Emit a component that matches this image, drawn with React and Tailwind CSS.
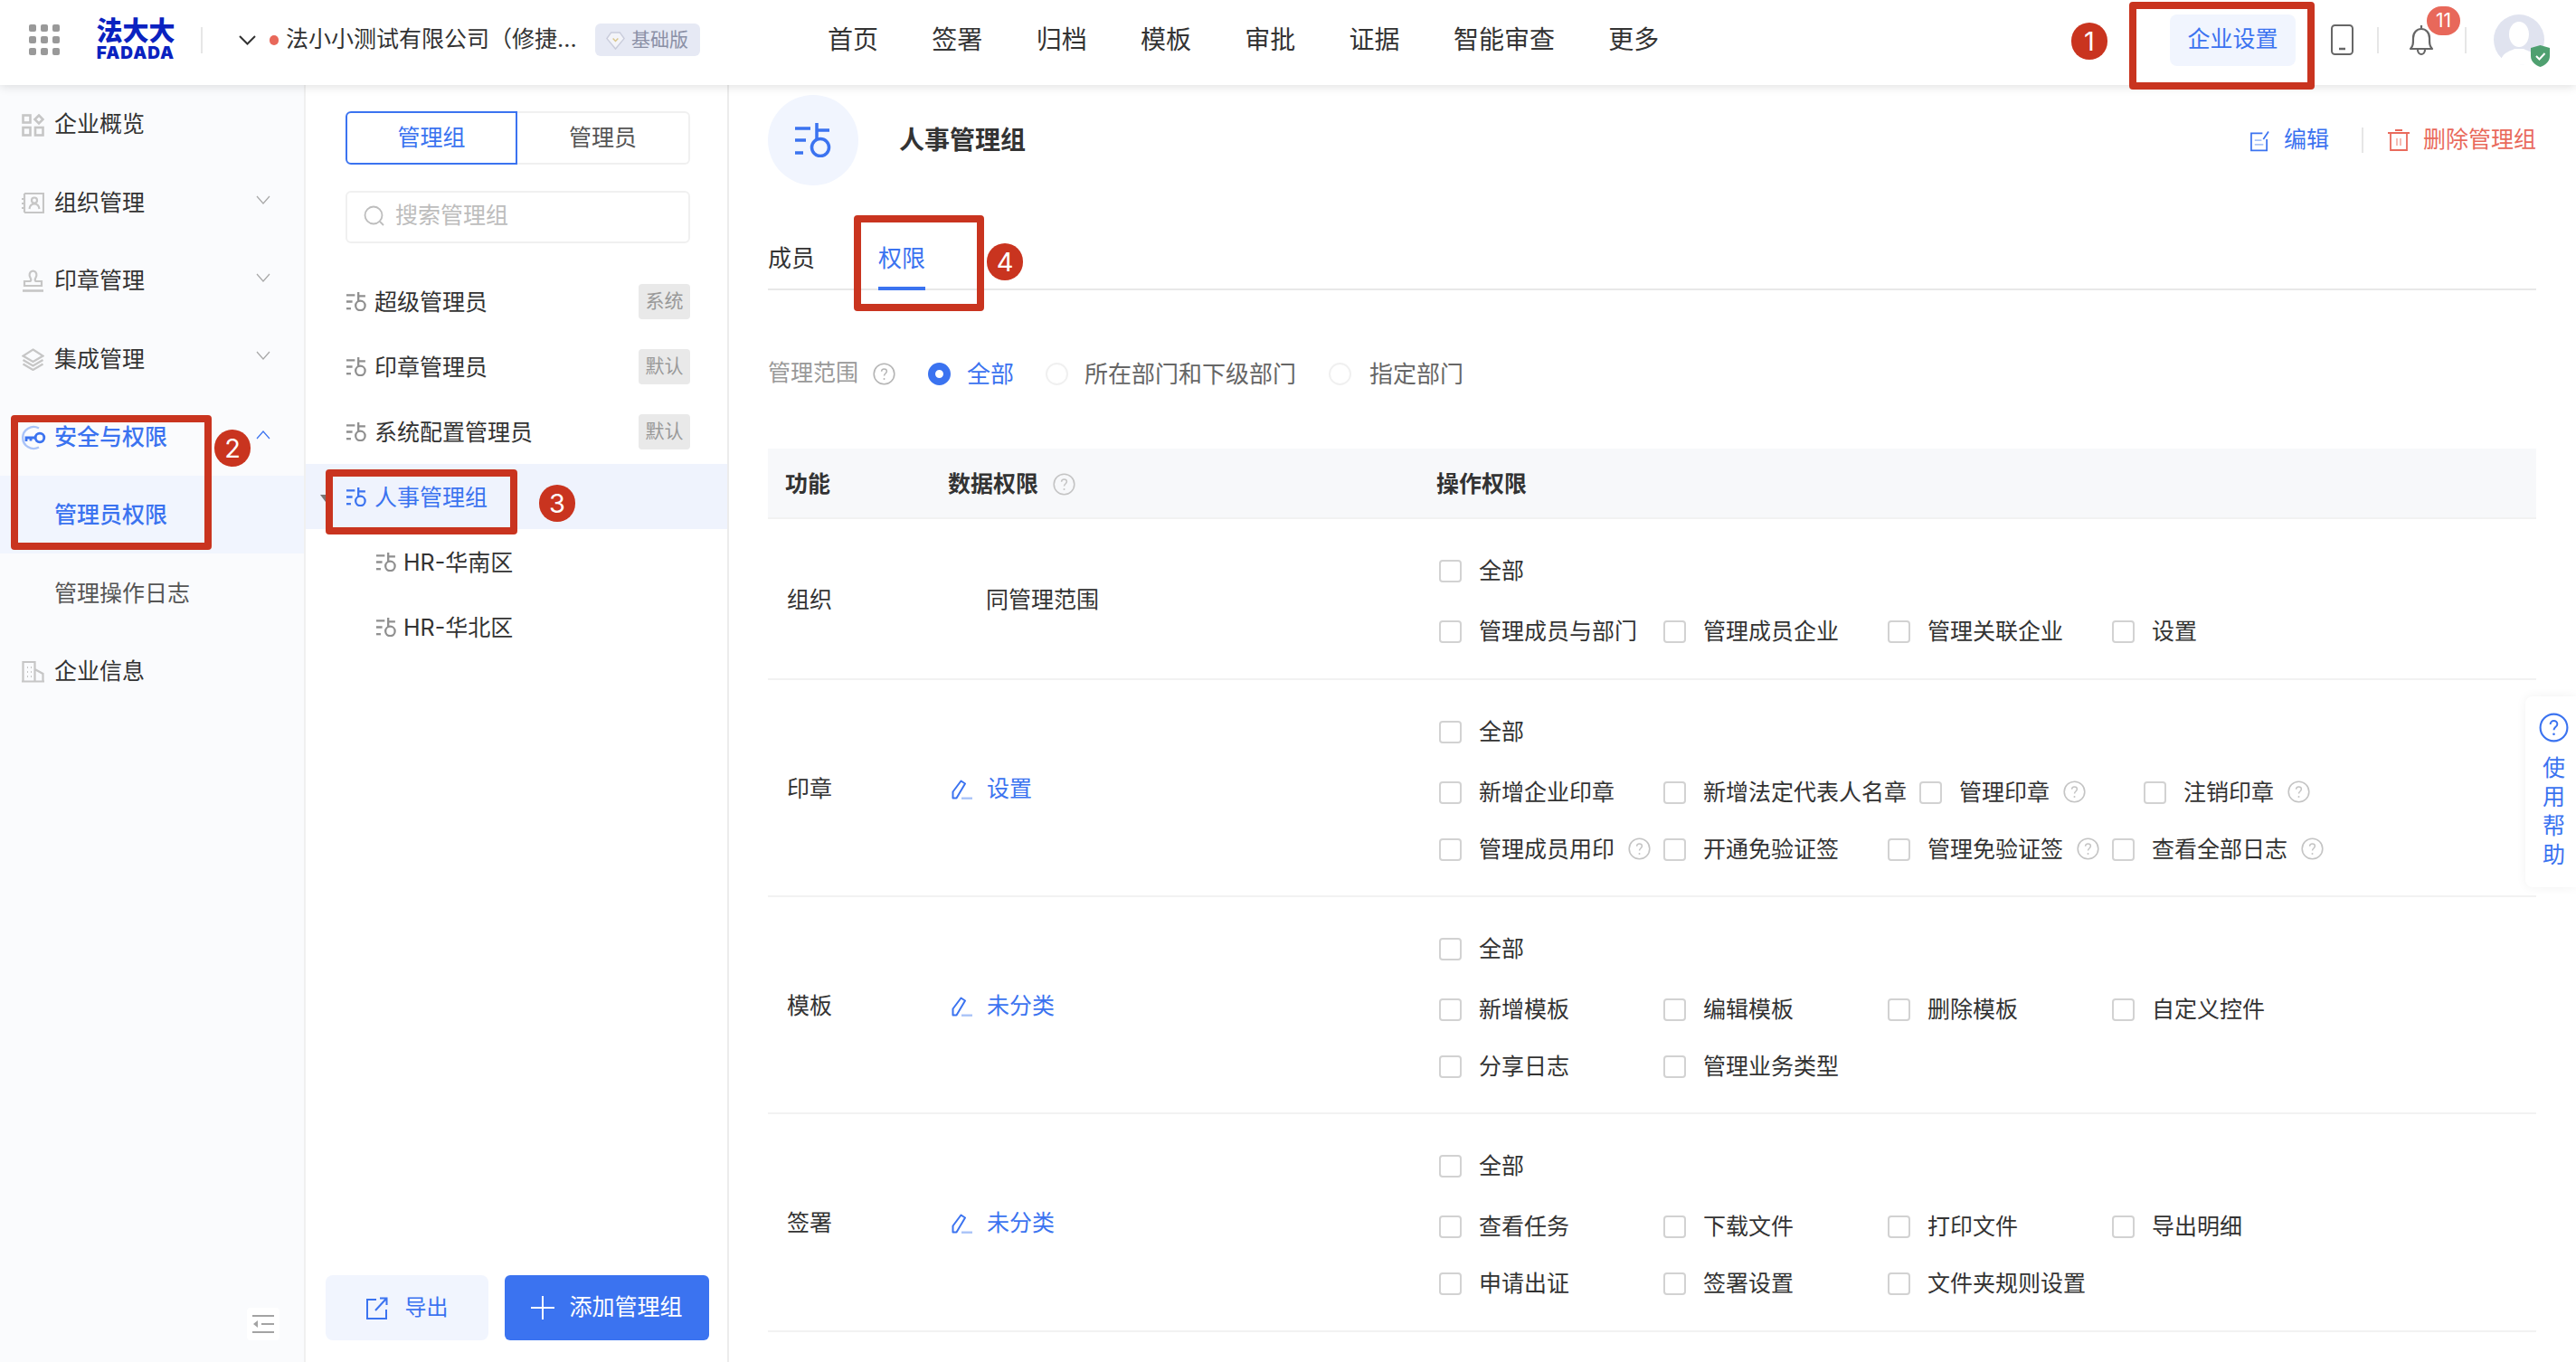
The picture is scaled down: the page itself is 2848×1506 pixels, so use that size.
import React from "react";

const BLUE = "#3b73f0";

function GroupIcon({ className = "w-[22px] h-[21px]", color = "#8f8f8f", width = 2.6 }) {
  return (
    <svg viewBox="0 0 40 38" fill="none" stroke={color} strokeWidth={width * 1.6} className={className}>
      <path d="M0 6h17M0 19h12" />
      <path d="M0 33h9" />
      <circle cx="28" cy="27" r="9.5" />
      <path d="M24 0v18M24 8h14" />
    </svg>
  );
}

function Chevron({ up = false, color = "#a8a8a8" }) {
  return (
    <svg viewBox="0 0 16 10" fill="none" stroke={color} strokeWidth="1.2" className={`w-[16px] h-[10px] ${up ? "-mt-[5px]" : "-mt-[8px]"}`}>
      <path d={up ? "M1 9l7-8 7 8" : "M1 1l7 8 7-8"} />
    </svg>
  );
}

function HelpIcon({ color = "#c4c4c4", className = "w-[25px] h-[25px]" }) {
  return (
    <svg viewBox="0 0 25 25" fill="none" className={className}>
      <circle cx="12.5" cy="12.5" r="11.3" stroke={color} strokeWidth="1.6" />
      <path d="M9.6 9.8c0-1.7 1.3-2.9 2.9-2.9s2.9 1.1 2.9 2.7c0 2.4-2.9 2.4-2.9 5" stroke={color} strokeWidth="1.5" />
      <circle cx="12.5" cy="18" r="1" fill={color} />
    </svg>
  );
}

function Pencil() {
  return (
    <svg viewBox="0 0 23 22" fill="none" className="w-[23px] h-[22px] shrink-0">
      <path d="M1.500 20.500v-7L10.500 1.500l4.500 3L5.500 20.500z" stroke={BLUE} strokeWidth="2" strokeLinejoin="round" />
      <path d="M11 20.700h12" stroke="#a9c3f8" strokeWidth="2.400" />
    </svg>
  );
}

function SideIcon({ name, active }) {
  const c = "#c6c6c6";
  if (name === "overview")
    return (
      <svg viewBox="0 0 25 25" fill="none" stroke={c} strokeWidth="2.600" className="w-[25px] h-[25px]">
        <rect x="1.500" y="1.500" width="8" height="8" />
        <path d="M19 1.500l4.500 4.500-4.500 4.500-4.500-4.500z" />
        <rect x="1.500" y="15" width="8" height="8.500" />
        <rect x="15" y="15" width="8.500" height="8.500" />
      </svg>
    );
  if (name === "org")
    return (
      <svg viewBox="0 0 25 25" fill="none" stroke={c} strokeWidth="2.200" className="w-[25px] h-[25px]">
        <path d="M3 2h21v21H3" />
        <path d="M3 2v21" />
        <path d="M0 8h4M0 13h4M0 18h4" />
        <circle cx="14" cy="9.500" r="3" />
        <path d="M8.500 19c.5-4 3-5.500 5.500-5.500s5 1.500 5.500 5.500" />
      </svg>
    );
  if (name === "seal")
    return (
      <svg viewBox="0 0 25 25" fill="none" stroke={c} strokeWidth="2.200" className="w-[25px] h-[25px]">
        <path d="M9.500 9c-1.500-2-1.500-7 3-7.500 4.500.5 4.500 5.500 3 7.500-1 1.500-1 3 0 4h6.500v5H3v-5h6.500c1-1 1-2.500 0-4z" />
        <path d="M1 23.500h23" strokeWidth="2.600" />
      </svg>
    );
  if (name === "layers")
    return (
      <svg viewBox="0 0 25 25" fill="none" stroke={c} strokeWidth="2.200" className="w-[25px] h-[25px]">
        <path d="M12.500 1.500l11 7-11 6.500-11-6.500z" />
        <path d="M1.500 13l11 6.500 11-6.500" />
        <path d="M1.500 17.500l11 6.500 11-6.500" />
      </svg>
    );
  if (name === "key")
    return (
      <svg viewBox="0 0 28 28" fill="none" className="w-[28px] h-[28px] -ml-[1px] shrink-0">
        <path d="M20 3.500a12 12 0 1 0 0 21" stroke="#a9c3f8" strokeWidth="2.400" />
        <circle cx="21" cy="14" r="4.800" stroke={active ? BLUE : c} strokeWidth="2.800" />
        <path d="M16 14H6v4M11 14v3.500" stroke={active ? BLUE : c} strokeWidth="2.800" />
      </svg>
    );
  return (
    <svg viewBox="0 0 25 25" fill="none" stroke={c} strokeWidth="2.200" className="w-[25px] h-[25px]">
      <path d="M1.500 23.500V2h13v21.500M14.500 10l9 5v8.500M0 23.500h25" />
      <path d="M6 8h1M10 8h1M6 13h1M10 13h1M6 18h1M10 18h1" />
    </svg>
  );
}

const sideItems = [
  { label: "企业概览", icon: "overview" },
  { label: "组织管理", icon: "org", chevron: true },
  { label: "印章管理", icon: "seal", chevron: true },
  { label: "集成管理", icon: "layers", chevron: true },
  { label: "安全与权限", icon: "key", chevron: true, up: true, active: true },
  { label: "管理员权限", sub: true, current: true },
  { label: "管理操作日志", sub: true },
  { label: "企业信息", icon: "building" },
];

const groups = [
  { label: "超级管理员", tag: "系统" },
  { label: "印章管理员", tag: "默认" },
  { label: "系统配置管理员", tag: "默认" },
  { label: "人事管理组", selected: true },
  { label: "HR-华南区", child: true },
  { label: "HR-华北区", child: true },
];

const navItems = ["首页", "签署", "归档", "模板", "审批", "证据", "智能审查", "更多"];

const permissions = [
  {
    name: "组织",
    plain: "同管理范围",
    height: "h-[178px]",
    lines: [[{ t: "管理成员与部门" }, { t: "管理成员企业" }, { t: "管理关联企业" }, { t: "设置" }]],
  },
  {
    name: "印章",
    link: "设置",
    height: "h-[240px]",
    lines: [
      [{ t: "新增企业印章" }, { t: "新增法定代表人名章" }, { t: "管理印章", help: true }, { t: "注销印章", help: true }],
      [{ t: "管理成员用印", help: true }, { t: "开通免验证签" }, { t: "管理免验证签", help: true }, { t: "查看全部日志", help: true }],
    ],
  },
  {
    name: "模板",
    link: "未分类",
    height: "h-[240px]",
    lines: [
      [{ t: "新增模板" }, { t: "编辑模板" }, { t: "删除模板" }, { t: "自定义控件" }],
      [{ t: "分享日志" }, { t: "管理业务类型" }],
    ],
  },
  {
    name: "签署",
    link: "未分类",
    height: "h-[241px]",
    lines: [
      [{ t: "查看任务" }, { t: "下载文件" }, { t: "打印文件" }, { t: "导出明细" }],
      [{ t: "申请出证" }, { t: "签署设置" }, { t: "文件夹规则设置" }],
    ],
  },
];

function Option({ t, help, wide = true }) {
  return (
    <div className={`flex items-center h-[30px] ${wide ? "min-w-[234px]" : ""}`}>
      <span className="w-[25px] h-[25px] mt-[2px] shrink-0 rounded-[4px] border-2 border-[#d2d2d2] bg-white" />
      <span className="ml-[19px] pt-[3px] whitespace-nowrap">{t}</span>
      {help && (
        <span className="ml-[15px] flex">
          <HelpIcon />
        </span>
      )}
    </div>
  );
}

function Header() {
  return (
    <header className="relative z-10 h-[94px] shrink-0 pb-[6px] bg-white flex items-center shadow-[0_2px_10px_rgba(0,0,0,0.12)]">
      <div className="w-[915px] shrink-0 flex items-center pl-[32px]">
        <div className="grid grid-cols-3 gap-[5.500px] w-[34px]">
          {Array.from({ length: 9 }).map((_, i) => (
            <span key={i} className="w-[7.500px] h-[7.500px] rounded-[2px] bg-[#999999]" />
          ))}
        </div>
        <div className="ml-[41px] w-[86px] flex flex-col items-center text-[#0a22c0]">
          <span className="text-[29px] leading-[26px] font-black whitespace-nowrap">法大大</span>
          <span className="mt-[3px] text-[19px] leading-[15px] font-black tracking-[1px]">FADADA</span>
        </div>
        <span className="ml-[29px] w-[2px] h-[29px] bg-[#e6e6e6]" />
        <svg viewBox="0 0 19 11" fill="none" stroke="#333333" strokeWidth="2" className="ml-[40px] w-[19px] h-[11px]">
          <path d="M1 1l8.500 8.500L18 1" />
        </svg>
        <span className="ml-[15px] w-[10px] h-[11px] rounded-full bg-[#e8685a]" />
        <span className="ml-[8px] w-[327px] text-[25px] text-[#333333] whitespace-nowrap overflow-hidden">法小小测试有限公司（修捷...</span>
        <span className="ml-[15px] w-[116px] h-[36px] rounded-[6px] bg-[#e6e9f4] flex items-center pl-[12px] text-[21px] text-[#8b90a6]">
          <svg viewBox="0 0 22 24" fill="none" className="w-[21px] h-[23px]">
            <path d="M6 3h10l5 7-10 12L1 10z" fill="#f3f4f9" stroke="#c9ccdb" strokeWidth="1.500" />
            <path d="M8 10l3 3 3-3" stroke="#d9c58a" strokeWidth="1.500" />
          </svg>
          <span className="ml-[7px]">基础版</span>
        </span>
      </div>
      <nav className="flex items-center gap-[59.300px] text-[28px] text-[#333333] whitespace-nowrap">
        {navItems.map((n) => (
          <span key={n}>{n}</span>
        ))}
      </nav>
      <div className="ml-auto flex items-center">
        <span className="w-[139px] h-[57px] rounded-[8px] bg-[#f1f5fe] text-[25px] text-[#3b73f0] flex items-center justify-center">企业设置</span>
        <svg viewBox="0 0 25 34" fill="none" className="ml-[39px] w-[25px] h-[34px]">
          <rect x="1" y="1" width="23" height="32" rx="3.500" stroke="#666666" strokeWidth="2" />
          <path d="M9 27h7" stroke="#666666" strokeWidth="2.500" />
        </svg>
        <span className="ml-[26px] w-[2px] h-[29px] bg-[#e6e6e6]" />
        <span className="relative ml-[33px] flex">
          <svg viewBox="0 0 28 35" fill="none" stroke="#666666" strokeWidth="2.200" className="w-[28px] h-[35px]">
            <path d="M14 1v3M2 27c3-3 3-6 3-12 0-6 4-10 9-10s9 4 9 10c0 6 0 9 3 12z" strokeLinejoin="round" />
            <path d="M10 28c0 3 2 5 4 5s4-2 4-5" />
          </svg>
          <span className="absolute left-[20px] -top-[20px] w-[37px] h-[32px] rounded-full bg-[#e8685a] text-white text-[21px] leading-[32px] text-center">11</span>
        </span>
        <span className="ml-[34px] w-[2px] h-[29px] bg-[#e6e6e6]" />
        <span className="relative ml-[30px] mr-[35px] flex">
          <svg viewBox="0 0 56 56" className="w-[56px] h-[56px]">
            <circle cx="28" cy="28" r="28" fill="#e0e3ef" />
            <ellipse cx="28" cy="22" rx="11" ry="14" fill="#ffffff" />
            <path d="M8 50c3-9 12-10 15-12h10c3 2 12 3 15 12-5 4-12 6-20 6S13 54 8 50z" fill="#ffffff" />
          </svg>
          <svg viewBox="0 0 21 24" className="absolute left-[41px] top-[34px] w-[21px] h-[24px]">
            <path d="M10.500 0L21 3v9c0 6-5 10-10.500 12C5 22 0 18 0 12V3z" fill="#4fa070" />
            <path d="M6 12l3.500 3.500L15.500 9" fill="none" stroke="#ffffff" strokeWidth="2" />
          </svg>
        </span>
      </div>
    </header>
  );
}

function Sidebar() {
  return (
    <aside className="relative w-[338px] shrink-0 border-r-2 border-[#f0f0f0] bg-[#fafbfd] text-[25px] text-[#333333]">
      {sideItems.map((item) => (
        <div
          key={item.label}
          className={`h-[86.400px] flex items-center pt-[2px] ${item.sub ? "pl-[60px]" : "pl-[24px]"} pr-[37px] ${item.current ? "bg-[#f1f5fe]" : ""} ${item.active || item.current ? "text-[#3b73f0] font-medium" : ""} ${item.sub && !item.current ? "text-[#555555]" : ""}`}
        >
          {item.icon && (
            <span className="w-[25px] mr-[11px] flex">
              <SideIcon name={item.icon} active={item.active} />
            </span>
          )}
          <span>{item.label}</span>
          {item.chevron && (
            <span className="ml-auto flex">
              <Chevron up={item.up} color={item.up ? BLUE : "#a8a8a8"} />
            </span>
          )}
        </div>
      ))}
      <span className="absolute left-[273px] top-[1352px] w-[36px] h-[36px] rounded-[4px] bg-white flex items-center justify-center">
        <svg viewBox="0 0 24 22" fill="none" stroke="#a3a3a3" strokeWidth="2.200" className="w-[24px] h-[22px]">
          <path d="M0 2h24M10 11h14M0 20h24" />
          <path d="M6 7v8l-5-4z" fill="#a3a3a3" stroke="none" />
        </svg>
      </span>
    </aside>
  );
}

function GroupPanel() {
  return (
    <section className="relative w-[468px] shrink-0 border-r-2 border-[#ececec] bg-white flex flex-col text-[25px] text-[#333333]">
      <div className="pt-[29px] pl-[44px] pr-[41px]">
        <div className="flex h-[59px]">
          <span className="w-[190px] rounded-l-[6px] border-2 border-[#3b73f0] text-[#3b73f0] flex items-center justify-center">管理组</span>
          <span className="flex-1 rounded-r-[6px] border-2 border-l-0 border-[#f0f0f0] text-[#555555] flex items-center justify-center">管理员</span>
        </div>
        <div className="mt-[29px] h-[58px] pb-[2px] rounded-[6px] border-2 border-[#f0f0f0] flex items-center pl-[18px] text-[#bdbdbd]">
          <svg viewBox="0 0 23 24" fill="none" stroke="#bdbdbd" strokeWidth="1.800" className="w-[23px] h-[24px]">
            <circle cx="11" cy="11" r="9.500" />
            <path d="M18 18l4 4" />
          </svg>
          <span className="ml-[12px]">搜索管理组</span>
        </div>
      </div>
      <div className="mt-[28px]">
        {groups.map((g) => (
          <div
            key={g.label}
            className={`relative h-[72px] flex items-center pr-[41px] ${g.child ? "pl-[78px]" : "pl-[45px]"} ${g.selected ? "bg-[#eff3fd] text-[#3b73f0]" : ""}`}
          >
            <GroupIcon color={g.selected ? BLUE : "#8f8f8f"} />
            <span className={`pt-[3px] ${g.child ? "ml-[8px]" : "ml-[9px]"}`}>{g.label}</span>
            {g.selected && <span className="absolute left-[16px] top-[34px] w-0 h-0 border-x-[6px] border-x-transparent border-t-[8px] border-t-[#777777]" />}
            {g.tag && (
              <span className="ml-auto w-[57px] h-[39px] rounded-[4px] bg-[#e9e9e9] text-[21px] text-[#999999] flex items-center justify-center">{g.tag}</span>
            )}
          </div>
        ))}
      </div>
      <div className="mt-auto mb-[24px] pl-[22px] flex gap-[18px]">
        <button className="w-[180px] h-[72px] rounded-[8px] bg-[#f1f5fe] text-[24px] text-[#3b73f0] flex items-center justify-center">
          <svg viewBox="0 0 24 25" fill="none" stroke={BLUE} strokeWidth="2" className="w-[24px] h-[25px]">
            <path d="M11 3H1v21h21V14" />
            <path d="M10 15L22 2M15 1.500h7.500V9" />
          </svg>
          <span className="ml-[19px]">导出</span>
        </button>
        <button className="w-[226px] h-[72px] rounded-[6px] bg-[#3b73f0] text-white flex items-center justify-center">
          <svg viewBox="0 0 26 26" fill="none" stroke="#ffffff" strokeWidth="2" className="w-[26px] h-[26px]">
            <path d="M13 0v26M0 13h26" />
          </svg>
          <span className="ml-[16px]">添加管理组</span>
        </button>
      </div>
    </section>
  );
}

function PermissionRow({ row }) {
  return (
    <div className={`${row.height} grid grid-cols-[199px_540px_1fr] border-b-2 border-[#f2f2f2]`}>
      <div className="pl-[21px] pt-[3px] flex items-center">{row.name}</div>
      <div className="pt-[3px] flex items-center">
        {row.plain && <span className="pl-[42px]">{row.plain}</span>}
        {row.link && (
          <span className="pl-[4px] flex items-center text-[#3b73f0]">
            <Pencil />
            <span className="ml-[16px]">{row.link}</span>
          </span>
        )}
      </div>
      <div className="pl-[3px] pt-[41px] flex flex-col">
        <div className="mb-[37px]">
          <Option t="全部" wide={false} />
        </div>
        <div className="flex flex-col gap-[33px]">
          {row.lines.map((line, i) => (
            <div key={i} className="flex gap-x-[14px]">
              {line.map((o) => (
                <Option key={o.t} t={o.t} help={o.help} />
              ))}
            </div>
          ))}
        </div>
      </div>
    </div>
  );
}

function Detail() {
  return (
    <main className="flex-1 min-w-0 pl-[43px] pr-[44px] pt-[11px] bg-white text-[25px] text-[#333333]">
      <div className="h-[100px] flex items-center">
        <span className="w-[100px] h-[100px] rounded-full bg-[#f1f5fe] flex items-center justify-center">
          <GroupIcon className="w-[40px] h-[38px]" color={BLUE} width={2.200} />
        </span>
        <h1 className="ml-[45px] text-[28px] font-semibold">人事管理组</h1>
        <div className="ml-auto flex items-center">
          <svg viewBox="0 0 22 25" fill="none" stroke={BLUE} strokeWidth="1.800" className="w-[21px] h-[25px]">
            <path d="M14 4H1v20h18V11" />
            <path d="M15 11l6-9" />
            <path d="M5 12h8M5 17h10" stroke="#a9c3f8" />
          </svg>
          <span className="ml-[16px] text-[#3b73f0]">编辑</span>
          <span className="ml-[36px] w-[2px] h-[28px] bg-[#e6e6e6]" />
          <svg viewBox="0 0 24 24" fill="none" stroke="#e96a5c" strokeWidth="1.800" className="ml-[27px] w-[24px] h-[24px]">
            <path d="M0 4h24M8 1h8M3 4v19h18V4" />
            <path d="M10 10v8M14 10v8" stroke="#f4b4ac" />
          </svg>
          <span className="ml-[15px] text-[#e96a5c]">删除管理组</span>
        </div>
      </div>
      <div className="mt-[64px] flex border-b-2 border-[#e8e8e8] text-[26px]">
        <span className="leading-[34px] pb-[14px]">成员</span>
        <span className="ml-[70px] -mb-[2px] leading-[34px] pb-[14px] border-b-4 border-[#3b73f0] text-[#3b73f0]">权限</span>
      </div>
      <div className="mt-[75px] h-[34px] flex items-center">
        <span className="text-[#999999]">管理范围</span>
        <span className="ml-[16px] flex">
          <HelpIcon color="#b5b5b5" />
        </span>
        <span className="ml-[36px] w-[25px] h-[25px] rounded-full border-[8px] border-[#3b73f0] bg-white" />
        <span className="ml-[18px] text-[26px] text-[#3b73f0]">全部</span>
        <span className="ml-[35px] w-[25px] h-[25px] rounded-full border-2 border-[#f0f0f0]" />
        <span className="ml-[18px] text-[26px] text-[#666666]">所在部门和下级部门</span>
        <span className="ml-[36px] w-[25px] h-[25px] rounded-full border-2 border-[#f0f0f0]" />
        <span className="ml-[20px] text-[26px] text-[#666666]">指定部门</span>
      </div>
      <div className="mt-[66px]">
        <div className="h-[78px] pt-[3px] bg-[#f7f8fa] grid grid-cols-[199px_540px_1fr] items-center font-semibold border-b-2 border-[#f2f2f2]">
          <span className="pl-[19px]">功能</span>
          <span className="flex items-center">
            数据权限
            <span className="ml-[16px] flex">
              <HelpIcon />
            </span>
          </span>
          <span>操作权限</span>
        </div>
        {permissions.map((row) => (
          <PermissionRow key={row.name} row={row} />
        ))}
      </div>
    </main>
  );
}

export default function App() {
  return (
    <div className="relative w-[2848px] h-[1506px] overflow-hidden bg-white flex flex-col font-['Inter','Noto_Sans_CJK_SC',sans-serif]">
      <Header />
      <div className="flex-1 min-h-0 flex">
        <Sidebar />
        <GroupPanel />
        <Detail />
      </div>

      {/* floating help tab */}
      <div className="absolute z-20 left-[2792px] top-[770px] w-[56px] h-[211px] rounded-l-[8px] bg-white shadow-[0_0_12px_rgba(0,0,0,0.06)] flex flex-col items-center pl-[7px] pt-[18px] text-[25px] leading-[32px] text-[#3b73f0]">
        <HelpIcon color={BLUE} className="w-[33px] h-[33px]" />
        <span className="mt-[12px] w-[25px] text-center break-all">使用帮助</span>
      </div>

      {/* red annotations drawn over the screenshot */}
      <div className="absolute z-30 left-[2354px] top-[2px] w-[205px] h-[97px] rounded-[4px] border-[8px] border-[#c9341f]" />
      <div className="absolute z-30 left-[12px] top-[459px] w-[222px] h-[149px] rounded-[4px] border-[8px] border-[#c9341f]" />
      <div className="absolute z-30 left-[360px] top-[519px] w-[212px] h-[72px] rounded-[4px] border-[8px] border-[#c9341f]" />
      <div className="absolute z-30 left-[944px] top-[238px] w-[144px] h-[106px] rounded-[4px] border-[8px] border-[#c9341f]" />
      <span className="absolute z-30 left-[2290px] top-[25px] w-[40px] h-[41px] rounded-full bg-[#c9341f] text-white text-[29px] leading-[41px] text-center">1</span>
      <span className="absolute z-30 left-[237px] top-[475px] w-[40px] h-[41px] rounded-full bg-[#c9341f] text-white text-[29px] leading-[41px] text-center">2</span>
      <span className="absolute z-30 left-[596px] top-[536px] w-[40px] h-[41px] rounded-full bg-[#c9341f] text-white text-[29px] leading-[41px] text-center">3</span>
      <span className="absolute z-30 left-[1091px] top-[269px] w-[40px] h-[41px] rounded-full bg-[#c9341f] text-white text-[29px] leading-[41px] text-center">4</span>
    </div>
  );
}
